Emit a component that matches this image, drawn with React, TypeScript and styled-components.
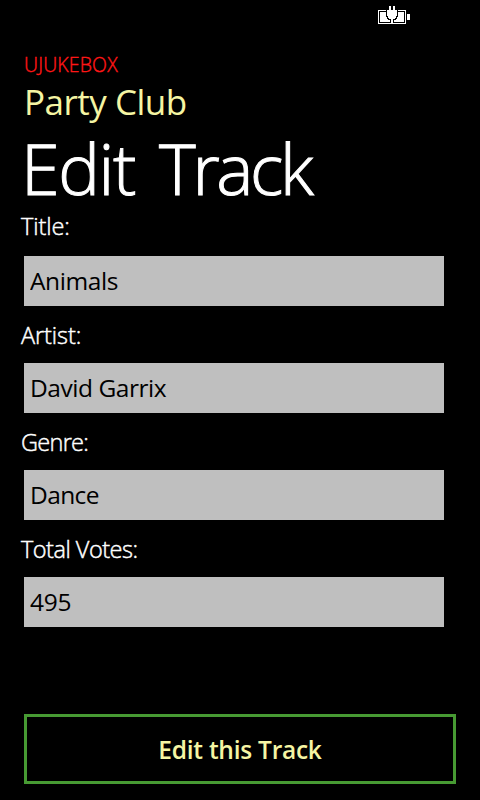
import React from 'react';
import styled, { createGlobalStyle } from 'styled-components';

const GlobalStyle = createGlobalStyle`
  * { box-sizing: border-box; }
  body { margin: 0; background: #000; font-family: "Open Sans", "Noto Sans", sans-serif; }
`;

const Screen = styled.main`
  display: flex;
  flex-direction: column;
  width: 480px;
  height: 800px;
  overflow: hidden;
  background: #000;
  color: #fff;
`;

const StatusBar = styled.div`
  display: flex;
  justify-content: flex-end;
  height: 32px;
  padding: 6px 70px 0 0;
`;

const Header = styled.header`
  display: flex;
  flex-direction: column;
  padding: 21px 0 0 24px;
  white-space: nowrap;
`;

const AppName = styled.div`
  font-size: 19.5px;
  font-weight: 300;
  line-height: 24px;
  letter-spacing: 0.15px;
  color: #ff1616;
  -webkit-text-stroke: 0.4px;
`;

const Club = styled.div`
  font-size: 35px;
  font-weight: 400;
  line-height: 50px;
  letter-spacing: -0.5px;
  color: #f5f5a3;
`;

const PageTitle = styled.h1`
  display: flex;
  gap: 24px;
  margin: -1px 0 0 -3px;
  font-size: 70px;
  font-weight: 300;
  line-height: 84px;
  -webkit-text-stroke: 1px;
`;

const Word = styled.span<{ $spacing: number }>`
  letter-spacing: ${(p) => p.$spacing}px;
`;

const Form = styled.form`
  display: flex;
  flex: 1;
  flex-direction: column;
`;

const Field = styled.label<{ $height: number }>`
  display: flex;
  flex-direction: column;
  justify-content: flex-end;
  height: ${(p) => p.$height}px;
`;

const Caption = styled.span<{ $spacing: number; $height: number }>`
  flex: none;
  height: ${(p) => p.$height}px;
  padding-left: 21px;
  font-size: 23.5px;
  font-weight: 300;
  line-height: 32px;
  letter-spacing: ${(p) => p.$spacing}px;
  -webkit-text-stroke: 0.45px;
`;

const Input = styled.input<{ $spacing: number }>`
  flex: none;
  width: 420px;
  height: 50px;
  margin: 0 0 0 24px;
  padding: 0 6px 1px;
  border: 0;
  border-radius: 0;
  background: #bfbfbf;
  color: #000;
  font: 400 24.5px/34px "Open Sans", "Noto Sans", sans-serif;
  letter-spacing: ${(p) => p.$spacing}px;
`;

const SubmitButton = styled.button`
  width: 432px;
  height: 70px;
  margin: auto 0 16px 24px;
  padding: 2px 0 0;
  border: 3px solid #479a33;
  background: #000;
  color: #f5f5a3;
  font: 600 24.5px/34px "Open Sans", "Noto Sans", sans-serif;
  letter-spacing: -0.25px;
`;

const fields = [
  { label: 'Title:', value: 'Animals', height: 96, caption: 46, ls: -0.1, vs: -0.4 },
  { label: 'Artist:', value: 'David Garrix', height: 107, caption: 44, ls: -0.1, vs: -0.45 },
  { label: 'Genre:', value: 'Dance', height: 107, caption: 44, ls: -0.7, vs: -0.6 },
  { label: 'Total Votes:', value: '495', height: 107, caption: 44, ls: -0.5, vs: -0.2 },
];

function BatteryIcon() {
  return (
    <svg width="32" height="19" viewBox="0 0 32 19" shapeRendering="crispEdges" aria-label="Charging">
      <path fill="#fff" d="M0 4h28v14H0zM29 8h3v6h-3z" />
      <path fill="#000" d="M1 5h26v12H1z" />
      <path fill="#fff" d="M2 6h24v10H2z" />
      <path fill="#000" d="M8 3h12v8h-1v2h-1v1h-2v3h-4v-3h-2v-1H9v-2H8z" />
      <path fill="#fff" d="M11 0h2v4h2V0h2v4h2v6h-1v2h-1v1h-2v5h-2v-5h-2v-1h-1v-2H9V4h2z" />
    </svg>
  );
}

export default function App() {
  return (
    <Screen>
      <GlobalStyle />
      <StatusBar><BatteryIcon /></StatusBar>
      <Header>
        <AppName>UJUKEBOX</AppName>
        <Club>Party Club</Club>
        <PageTitle>
          <Word $spacing={-1.4}>Edit</Word>{' '}
          <Word $spacing={-3.3}>Track</Word>
        </PageTitle>
      </Header>
      <Form>
        {fields.map((f) => (
          <Field key={f.label} $height={f.height}>
            <Caption $spacing={f.ls} $height={f.caption}>{f.label}</Caption>
            <Input $spacing={f.vs} defaultValue={f.value} />
          </Field>
        ))}
        <SubmitButton type="button">Edit this Track</SubmitButton>
      </Form>
    </Screen>
  );
}
